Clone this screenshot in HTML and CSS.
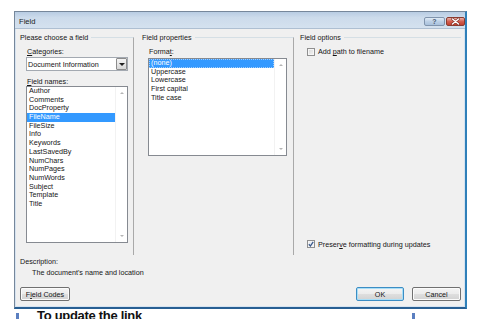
FILE: index.html
```html
<!DOCTYPE html>
<html lang="en">
<head>
  <meta charset="UTF-8" />
  <meta name="viewport" content="width=device-width, initial-scale=1.0" />
  <title>Field</title>
  <link rel="stylesheet" href="styles.css">
</head>
<body>
  <div class="dialog">
    <div class="titlebar">
      <span class="title">Field</span>
      <div class="caption-buttons">
        <span class="cap-help">?</span>
        <span class="cap-close">
          <svg width="9" height="7" viewBox="0 0 9 7">
            <path d="M1.5 1 L7.5 6 M7.5 1 L1.5 6" stroke="#7a2a22" stroke-width="2.6" stroke-linecap="round"/>
            <path d="M1.5 1 L7.5 6 M7.5 1 L1.5 6" stroke="#fff" stroke-width="1.5" stroke-linecap="round"/>
          </svg>
        </span>
      </div>
    </div>

    <div class="client">
      <div class="groups">
        <!-- left column -->
        <fieldset class="group group-choose">
          <legend>Please choose a field</legend>
          <div class="label label-cat"><u>C</u>ategories:</div>
          <div class="combo">
            <span class="combo-text">Document Information</span>
            <span class="combo-btn"><span class="arrow-down dark"></span></span>
          </div>
          <div class="label label-names"><u>F</u>ield names:</div>
          <div class="listbox names">
            <ul>
              <li>Author</li>
              <li>Comments</li>
              <li>DocProperty</li>
              <li class="selected">FileName</li>
              <li>FileSize</li>
              <li>Info</li>
              <li>Keywords</li>
              <li>LastSavedBy</li>
              <li>NumChars</li>
              <li>NumPages</li>
              <li>NumWords</li>
              <li>Subject</li>
              <li>Template</li>
              <li>Title</li>
            </ul>
            <div class="scroll"><span class="arrow-up"></span><span class="arrow-down"></span></div>
          </div>
        </fieldset>

        <!-- middle column -->
        <fieldset class="group group-props">
          <legend>Field properties</legend>
          <div class="label label-format">Forma<u>t</u>:</div>
          <div class="listbox formats">
            <ul>
              <li class="selected focused">(none)</li>
              <li>Uppercase</li>
              <li>Lowercase</li>
              <li>First capital</li>
              <li>Title case</li>
            </ul>
            <div class="scroll"><span class="arrow-up"></span><span class="arrow-down"></span></div>
          </div>
        </fieldset>

        <!-- right column -->
        <fieldset class="group group-options">
          <legend>Field options</legend>
          <label class="check check-path">
            <span class="box"></span>
            <span>Add <u>p</u>ath to filename</span>
          </label>
          <label class="check check-preserve">
            <span class="box checked">
              <svg width="6" height="6" viewBox="0 0 6 6"><path d="M0.8 3.2 L2.4 5 L5.2 0.8" fill="none" stroke="#3b5a8c" stroke-width="1.3"/></svg>
            </span>
            <span>Preser<u>v</u>e formatting during updates</span>
          </label>
        </fieldset>
      </div>

      <div class="description">
        <div class="label">Description:</div>
        <div class="desc-text">The document's name and location</div>
      </div>

      <div class="buttons">
        <button class="btn">F<u>i</u>eld Codes</button>
        <div class="buttons-right">
          <button class="btn btn-default">OK</button>
          <button class="btn btn-cancel">Cancel</button>
        </div>
      </div>
    </div>
  </div>

  <div class="behind">
    <span class="mark"></span>
    <span class="behind-text">To update the link</span>
    <span class="mark mark-right"></span>
  </div>
</body>
</html>
```

FILE: styles.css
```css
/* Page */
html, body {
  margin: 0;
  padding: 0;
}

body {
  background: #ffffff;
  font-family: "Liberation Sans", Arial, sans-serif;
  font-size: 7.2px;
  color: #151515;
  height: 319px;
  overflow: hidden;
}

/* Window frame */
.dialog {
  width: 453px;
  margin: 11px 0 0 14px;
  box-sizing: border-box;
  border: 1px solid #76879b;
  border-right: 2px solid #2f80b9;
  border-bottom: 2px solid #285f93;
  background: #d6e3f0;
  padding: 0 1px 1px 1px;
}

.titlebar {
  height: 17px;
  margin: 0 -1px;
  padding-left: 4px;
  display: flex;
  align-items: center;
  justify-content: space-between;
  background: linear-gradient(to bottom, #b8cce3, #ccdbeb 35%, #d4e1ef);
  border-bottom: 1px solid #aebfd2;
  box-sizing: border-box;
}

.title {
  font-size: 7.6px;
  color: #1b1b1b;
  padding-top: 3px;
}

.caption-buttons {
  display: flex;
  gap: 1px;
  align-self: flex-start;
  margin-top: 5px;
}

.cap-help,
.cap-close {
  height: 9px;
  box-sizing: border-box;
  border-radius: 2px;
  display: flex;
  align-items: center;
  justify-content: center;
}

.cap-help {
  width: 21px;
  border: 1px solid #8094ad;
  background: linear-gradient(to bottom, #e0eaf5, #bcd0e6 50%, #a9c1dc);
  color: #4a5a70;
  font-size: 7px;
  font-weight: bold;
}

.cap-close {
  width: 19px;
  border: 1px solid #8a3b30;
  background: linear-gradient(to bottom, #eab0a6, #d35f50 50%, #c2412f);
}

/* Client area */
.client {
  height: 277px;
  box-sizing: border-box;
  background: #f0f0f0;
  padding: 4px 3px 0 4px;
  display: flex;
  flex-direction: column;
}

.groups {
  display: flex;
}

.group {
  margin: 0;
  padding: 0;
  border: 0;
  border-top: 1px solid #d5dfe5;
  min-inline-size: 0;
  height: 222px;
  box-sizing: border-box;
}

.group legend {
  padding: 0 3px 0 0;
  line-height: 9px;
}

.group-choose {
  width: 114px;
  padding: 0 5px 0 6px;
  border-right: 1px solid #a9a9a9;
}

.group-choose legend {
  margin-left: -6px;
}

.group-props {
  width: 152px;
  margin-left: 8px;
  padding: 0 6px 0 6px;
  border-right: 1px solid #a9a9a9;
}

.group-props legend {
  margin-left: -6px;
}

.group-options {
  flex: 1;
  margin-left: 6px;
  padding-left: 7px;
  display: flex;
  flex-direction: column;
  align-items: flex-start;
}

.group-options legend {
  margin-left: -7px;
}

.label {
  line-height: 9px;
}

.label-cat {
  margin-top: 5px;
  padding-left: 1px;
}

.label-names {
  margin-top: 5.5px;
  padding-left: 1px;
}

.label-format {
  margin-top: 5px;
  padding-left: 1px;
}

/* Combo box */
.combo {
  margin-top: 1px;
  height: 14px;
  box-sizing: border-box;
  border: 1px solid #a3a9b1;
  background: #ffffff;
  display: flex;
  align-items: center;
  justify-content: space-between;
}

.combo-text {
  padding-left: 1px;
}

.combo-btn {
  width: 11px;
  height: 12px;
  box-sizing: border-box;
  border: 1px solid #8c8c8c;
  border-radius: 1px;
  background: linear-gradient(to bottom, #f4f4f4, #e6e6e6 50%, #d6d6d6);
  display: flex;
  align-items: center;
  justify-content: center;
}

/* List boxes */
.listbox {
  display: flex;
  box-sizing: border-box;
  border: 1px solid #868a91;
  background: #ffffff;
}

.listbox ul {
  flex: 1;
  margin: 0;
  padding: 0;
  list-style: none;
}

.listbox li {
  height: 8.7px;
  line-height: 8.7px;
  padding-left: 2px;
  white-space: nowrap;
}

.listbox li.selected {
  background: #3399ff;
  color: #ffffff;
}

.listbox li.focused {
  outline: 1px dotted #9fcdfd;
  outline-offset: -1px;
}

.names {
  margin-top: 0.5px;
  height: 157px;
}

.formats {
  margin-top: 2px;
  height: 98px;
}

.scroll {
  width: 11px;
  border-left: 1px solid #f2f2f2;
  display: flex;
  flex-direction: column;
  align-items: center;
  justify-content: space-between;
  padding: 5px 0 5px;
}

.arrow-up,
.arrow-down {
  width: 0;
  height: 0;
  border-left: 2.5px solid transparent;
  border-right: 2.5px solid transparent;
}

.arrow-up {
  border-bottom: 2px solid #b5b5b5;
}

.arrow-down {
  border-top: 2px solid #b5b5b5;
}

.arrow-down.dark {
  border-left-width: 3px;
  border-right-width: 3px;
  border-top: 3px solid #1e1e1e;
}

/* Check boxes */
.check {
  display: flex;
  align-items: center;
  gap: 3px;
  line-height: 9px;
}

.check-path {
  margin-top: 5px;
}

.check-preserve {
  margin-top: auto;
  margin-bottom: 6.5px;
}

.box {
  width: 8px;
  height: 8px;
  box-sizing: border-box;
  border: 1px solid #8f8f8f;
  background: linear-gradient(135deg, #d8d8d8, #f4f4f4);
  box-shadow: inset 0 0 0 1px #f6f6f6;
  display: flex;
  align-items: center;
  justify-content: center;
}

.box.checked {
  background: linear-gradient(135deg, #e2e8f0, #f8f8f8);
}

/* Description */
.description {
  margin-top: 1.5px;
}

.desc-text {
  margin-top: 2px;
  padding-left: 12px;
  line-height: 9px;
}

/* Buttons */
.buttons {
  margin-top: 10.5px;
  display: flex;
  justify-content: space-between;
}

.buttons-right {
  display: flex;
  gap: 8px;
}

.btn {
  height: 14px;
  width: 48px;
  padding: 0;
  margin: 0;
  box-sizing: border-box;
  border: 1px solid #707070;
  border-radius: 2px;
  background: linear-gradient(to bottom, #f4f4f4, #ececec 48%, #dedede 52%, #d2d2d2);
  box-shadow: inset 0 0 0 1px #fbfbfb;
  font-family: inherit;
  font-size: 7.2px;
  color: #151515;
}

.buttons > .btn {
  width: 50px;
}

.btn-default {
  border-color: #3c8dc4;
  box-shadow: inset 0 0 0 1px #a8def7;
}

.btn-cancel {
  width: 49px;
}

/* Document text peeking out below the dialog */
.behind {
  height: 10px;
  overflow: hidden;
  display: flex;
  align-items: flex-start;
}

.mark {
  width: 3px;
  height: 6px;
  margin: 4px 0 0 16px;
  background: #5b7fc0;
}

.mark-right {
  margin-left: auto;
  margin-right: 67px;
}

.behind-text {
  margin: 0 0 0 18px;
  font-size: 13px;
  line-height: 13px;
  font-weight: bold;
  letter-spacing: -0.3px;
  color: #111111;
  white-space: nowrap;
}
```
